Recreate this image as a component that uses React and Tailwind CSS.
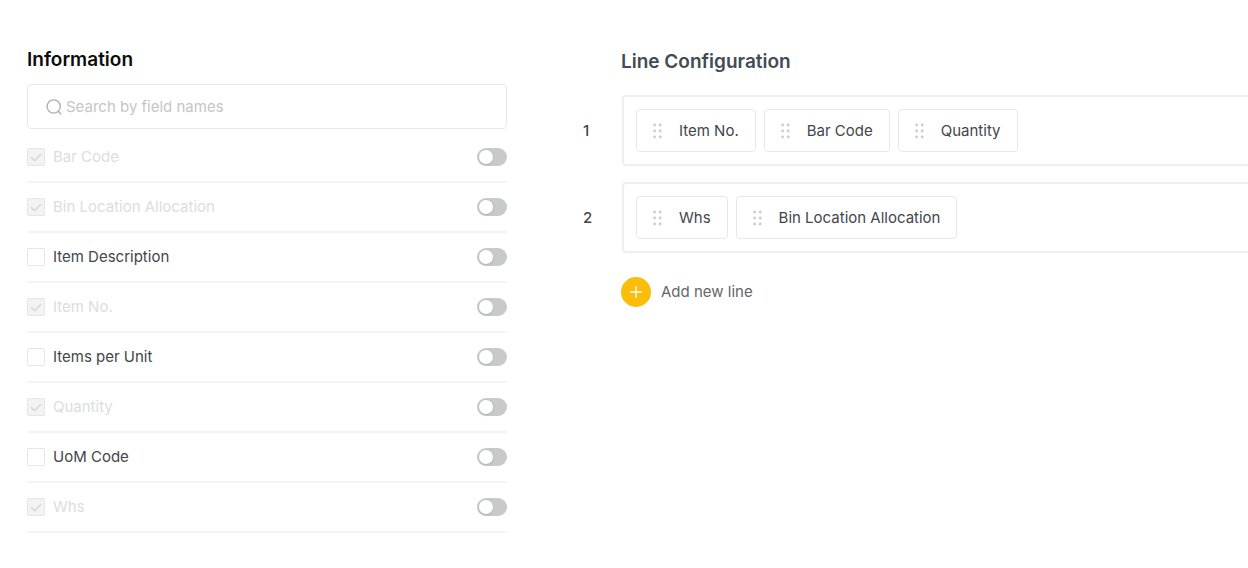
import { useState } from "react";

const FIELDS = [
  { name: "Bar Code", used: true },
  { name: "Bin Location Allocation", used: true },
  { name: "Item Description", used: false },
  { name: "Item No.", used: true },
  { name: "Items per Unit", used: false },
  { name: "Quantity", used: true },
  { name: "UoM Code", used: false },
  { name: "Whs", used: true },
];

const INITIAL_LINES = [
  ["Item No.", "Bar Code", "Quantity"],
  ["Whs", "Bin Location Allocation"],
];

function SearchIcon() {
  return (
    <svg className="h-4 w-4 shrink-0" viewBox="0 0 16 16" fill="none" stroke="#b0b2b2" strokeWidth="1.4" strokeLinecap="round" aria-hidden="true">
      <circle cx="7.7" cy="7.5" r="6.6" />
      <path d="M12.4 12.2 14.8 15" />
    </svg>
  );
}

function GripIcon() {
  return (
    <svg className="h-4 w-[9px] shrink-0" viewBox="0 0 9 16" fill="#cbcccd" aria-hidden="true">
      {[2, 8, 14].map((y) => (
        <g key={y}>
          <circle cx="1.6" cy={y} r="1.4" />
          <circle cx="7.2" cy={y} r="1.4" />
        </g>
      ))}
    </svg>
  );
}

function FieldRow({ field }) {
  const [selected, setSelected] = useState(field.used);
  const [on, setOn] = useState(false);
  return (
    <li className="flex h-[50px] items-center justify-between border-b-2 border-[#f4f4f4]">
      <label className={`flex items-center gap-2 text-[15px] leading-5 ${field.used ? "text-[#dcdddd]" : "text-[#41464a]"}`}>
        <span className="grid h-[18px] w-[18px] place-items-center">
          <input
            type="checkbox"
            checked={selected}
            disabled={field.used}
            onChange={(e) => setSelected(e.target.checked)}
            className="col-start-1 row-start-1 h-[18px] w-[18px] appearance-none rounded-xs border border-[#e6e6e6] bg-white disabled:bg-[#f3f3f3]"
          />
          {selected && (
            <svg className="pointer-events-none col-start-1 row-start-1 h-3 w-3" viewBox="0 0 12 12" fill="none" stroke="#d6d6d6" strokeWidth="1.4" aria-hidden="true">
              <path d="M1 6.2 4.6 9.8 11 3" />
            </svg>
          )}
        </span>
        {field.name}
      </label>
      <button
        type="button"
        role="switch"
        aria-checked={on}
        aria-label={`Toggle ${field.name}`}
        onClick={() => setOn(!on)}
        className={`flex h-[18px] w-[30px] items-center rounded-full bg-[#c8caca] px-0.5 ${on ? "justify-end" : "justify-start"}`}
      >
        <span className="h-[14px] w-[14px] rounded-full bg-white shadow-sm" />
      </button>
    </li>
  );
}

export default function App() {
  const [lines, setLines] = useState(INITIAL_LINES);
  return (
    <main className="flex items-start bg-white pl-[27px] font-['Inter',sans-serif]">
      <section className="w-[480px] shrink-0 pt-[46px]">
        <h2 className="text-[19px] leading-7 font-semibold text-[#0c0c0c]">Information</h2>
        <label className="mt-[10px] flex h-[45px] items-center gap-1 rounded-sm border border-[#e8e8e8] px-[18px]">
          <SearchIcon />
          <input
            type="text"
            aria-label="Search by field names"
            placeholder="Search by field names"
            className="min-w-0 flex-1 text-[15px] leading-5 text-[#41464a] outline-none placeholder:text-[#c4c6c6]"
          />
        </label>
        <ul className="mt-1">
          {FIELDS.map((field) => (
            <FieldRow key={field.name} field={field} />
          ))}
        </ul>
      </section>

      <section className="min-w-0 flex-1 pt-12 pl-[76px]">
        <h2 className="pl-[38px] text-[19px] leading-7 font-semibold text-[#434b54]">Line Configuration</h2>
        <ol className="mt-[19px] flex flex-col gap-4">
          {lines.map((items, i) => (
            <li key={i} className="flex items-center">
              <span className="w-[39px] shrink-0 text-[15px] leading-5 font-medium text-[#41464a]">{i + 1}</span>
              <ul className="flex h-[71px] min-w-0 flex-1 items-center gap-2 rounded-l-sm border-2 border-r-0 border-[#efefef] px-3">
                {items.map((item) => (
                  <li key={item} className="flex h-[43px] shrink-0 items-center gap-[17px] rounded-sm border border-[#e8e8e8] px-4 text-[15px] leading-5 text-[#41464a]">
                    <GripIcon />
                    {item}
                  </li>
                ))}
              </ul>
            </li>
          ))}
        </ol>
        <button type="button" onClick={() => setLines([...lines, []])} className="mt-6 ml-[38px] flex items-center gap-[10px] text-[15px] leading-5 text-[#63676a]">
          <span className="grid h-[30px] w-[30px] place-items-center rounded-full bg-[#fbbc0a]">
            <svg className="h-3 w-3" viewBox="0 0 12 12" fill="none" stroke="#fff" strokeWidth="1.3" strokeLinecap="round" aria-hidden="true">
              <path d="M6 .6v10.8M.6 6h10.8" />
            </svg>
          </span>
          Add new line
        </button>
      </section>
    </main>
  );
}
